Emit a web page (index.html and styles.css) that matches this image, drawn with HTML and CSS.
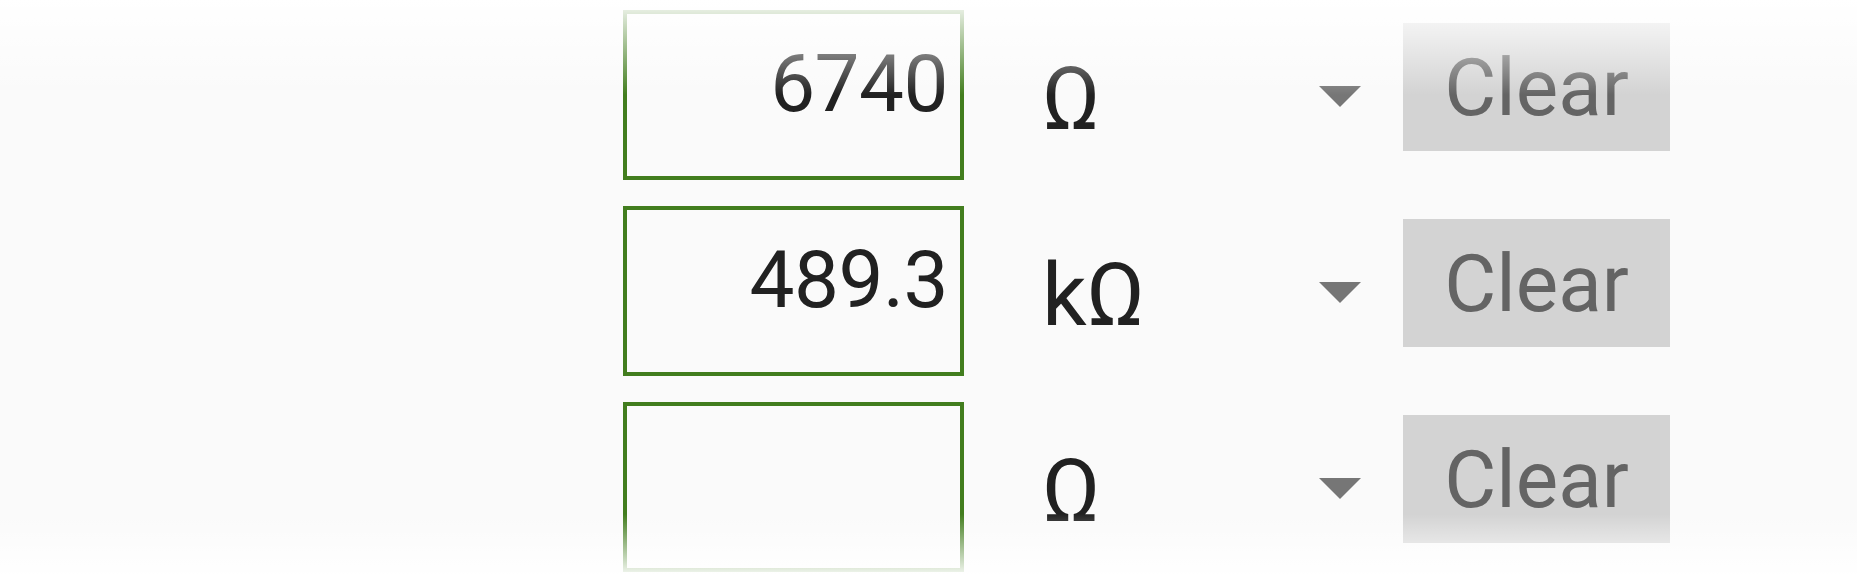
FILE: index.html
```html
<!DOCTYPE html>
<html lang="en">
<head>
<meta charset="utf-8">
<title>Resistance converter</title>
<link rel="stylesheet" href="styles.css">
</head>
<body>
<div class="picker">
  <div class="row">
    <input class="value" type="text" value="6740">
    <div class="unit"><span class="unit-text">Ω</span><span class="caret"></span></div>
    <button class="clear">Clear</button>
  </div>
  <div class="row">
    <input class="value" type="text" value="489.3">
    <div class="unit"><span class="unit-text">kΩ</span><span class="caret"></span></div>
    <button class="clear">Clear</button>
  </div>
  <div class="row">
    <input class="value" type="text" value="">
    <div class="unit"><span class="unit-text">Ω</span><span class="caret"></span></div>
    <button class="clear">Clear</button>
  </div>
</div>
</body>
</html>
```
FILE: styles.css
```css
html, body {
  margin: 0;
  padding: 0;
  height: 100%;
  background: #fafafa;
  overflow: hidden;
}

.picker {
  position: relative;
  height: 574px;
  box-sizing: border-box;
  padding: 9.5px 0 0 623px;
  display: flex;
  flex-direction: column;
  gap: 26.2px;
  font-family: Roboto, "Liberation Sans", sans-serif;
}

.picker::before,
.picker::after {
  content: "";
  position: absolute;
  left: 0;
  right: 0;
  pointer-events: none;
}

.picker::before {
  top: 0;
  height: 95px;
  background: linear-gradient(to bottom, rgba(255,255,255,0.97), rgba(255,255,255,0));
}

.picker::after {
  bottom: 0;
  height: 60px;
  background: linear-gradient(to top, rgba(255,255,255,0.93), rgba(255,255,255,0));
}

.row {
  display: flex;
  align-items: flex-start;
  height: 170px;
  flex: none;
}

.value {
  box-sizing: border-box;
  width: 341px;
  height: 170px;
  margin: 0;
  border: 4px solid #427d1e;
  border-radius: 0;
  background: #fafafa;
  padding: 0 12px 21px 0;
  font-family: Roboto, "Liberation Sans", sans-serif;
  font-size: 80px;
  letter-spacing: -0.5px;
  color: #212121;
  text-align: right;
  outline: none;
}

.unit {
  box-sizing: border-box;
  width: 319px;
  margin-left: 78px;
  height: 170px;
  display: flex;
  justify-content: space-between;
  align-items: flex-start;
}

.unit-text {
  font-size: 88px;
  line-height: normal;
  padding-top: 37px;
  color: #212121;
}

.caret {
  width: 0;
  height: 0;
  margin-top: 76px;
  border-left: 21px solid transparent;
  border-right: 21px solid transparent;
  border-top: 21px solid #767676;
}

.clear {
  box-sizing: border-box;
  width: 267px;
  height: 128px;
  margin: 13px 0 0 42px;
  padding: 3px 0 0;
  border: none;
  border-radius: 0;
  background: #d3d3d3;
  color: #646464;
  font-family: Roboto, "Liberation Sans", sans-serif;
  font-size: 80px;
  line-height: normal;
  text-align: center;
}
```
